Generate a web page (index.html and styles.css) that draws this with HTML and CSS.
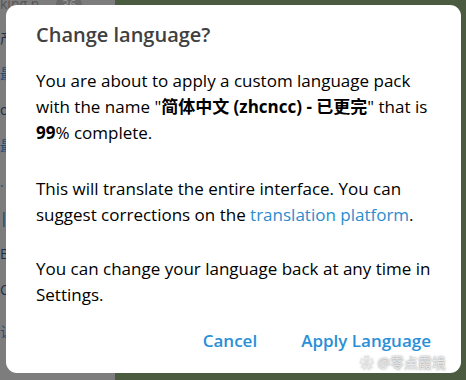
FILE: index.html
```html
<!DOCTYPE html>
<html lang="en">
<head>
  <meta charset="UTF-8" />
  <title>Change language</title>
  <link rel="stylesheet" href="styles.css">
</head>
<body>
  <div class="fundo">
    <div class="lista">
      <div class="item topo">king n...<span class="badge">36</span></div>
      <div class="item">产</div>
      <div class="item azul">最</div>
      <div class="item">o</div>
      <div class="item azul">最</div>
      <div class="item azul">.</div>
      <div class="item">|</div>
      <div class="item">B</div>
      <div class="item">C</div>
      <div class="item azul rodape">让实IP相应IP</div>
    </div>
    <div class="papel"></div>
  </div>

  <div class="dialogo">
    <h2>Change language?</h2>
    <p>You are about to apply a custom language pack with the name "<b>简体中文 (zhcncc) - 已更完</b>" that is <b>99</b>% complete.</p>
    <p class="curto">This will translate the entire interface. You can suggest corrections on the <a href="#">translation platform</a>.</p>
    <p>You can change your language back at any time in Settings.</p>
    <div class="botoes">
      <button>Cancel</button>
      <button>Apply Language</button>
    </div>
  </div>
  <div class="marca">&#10048; @零点霞境</div>
</body>
</html>
```

FILE: styles.css
```css
body {
  margin: 0;
  width: 466px;
  height: 380px;
  overflow: hidden;
  font-family: "Open Sans", "Noto Sans CJK SC", sans-serif;
  background: #4a5a40;
}
.fundo {
  display: flex;
  height: 380px;
}
.lista {
  width: 115px;
  background: #7d7d7d;
  color: #1d2e4a;
  font-size: 14px;
}
.item {
  height: 36px;
  line-height: 36px;
}
.item.topo {
  height: 20px;
  line-height: 8px;
  color: #555;
}
.item.azul {
  color: #1f4d78;
}
.item.rodape {
  margin-top: 14px;
  line-height: 20px;
}
.badge {
  background: #6a6a6a;
  color: #999;
  border-radius: 9px;
  padding: 0 6px;
  margin-left: 6px;
  font-size: 12px;
}
.papel {
  flex: 1;
  background: #4b5b3f;
}
.dialogo {
  position: absolute;
  left: 6px;
  top: 5px;
  width: 455px;
  height: 368px;
  box-sizing: border-box;
  background: #fff;
  border-radius: 11px;
  padding: 17px 28px 0 30px;
}
.dialogo h2 {
  margin: 0 0 20px;
  font-size: 20px;
  font-weight: 600;
  color: #404040;
  line-height: 26px;
}
.dialogo p {
  margin: 0 0 30px;
  font-size: 17px;
  line-height: 26px;
  color: #000;
}
.dialogo p.curto {
  margin-bottom: 28px;
}
.dialogo b {
  font-weight: 700;
}
.dialogo a {
  color: #2b8ccf;
  text-decoration: none;
}
.botoes {
  display: flex;
  justify-content: flex-end;
  gap: 44px;
  margin-top: -9px;
  padding-right: 2px;
}
.botoes button {
  background: none;
  border: none;
  padding: 0;
  font-family: "Open Sans", sans-serif;
  font-size: 17px;
  font-weight: 600;
  color: #2a8fd6;
  cursor: pointer;
}
.marca {
  position: absolute;
  right: 20px;
  bottom: 8px;
  font-size: 14px;
  color: #eaeaea;
  text-shadow: 0 0 2px #777;
}
```
